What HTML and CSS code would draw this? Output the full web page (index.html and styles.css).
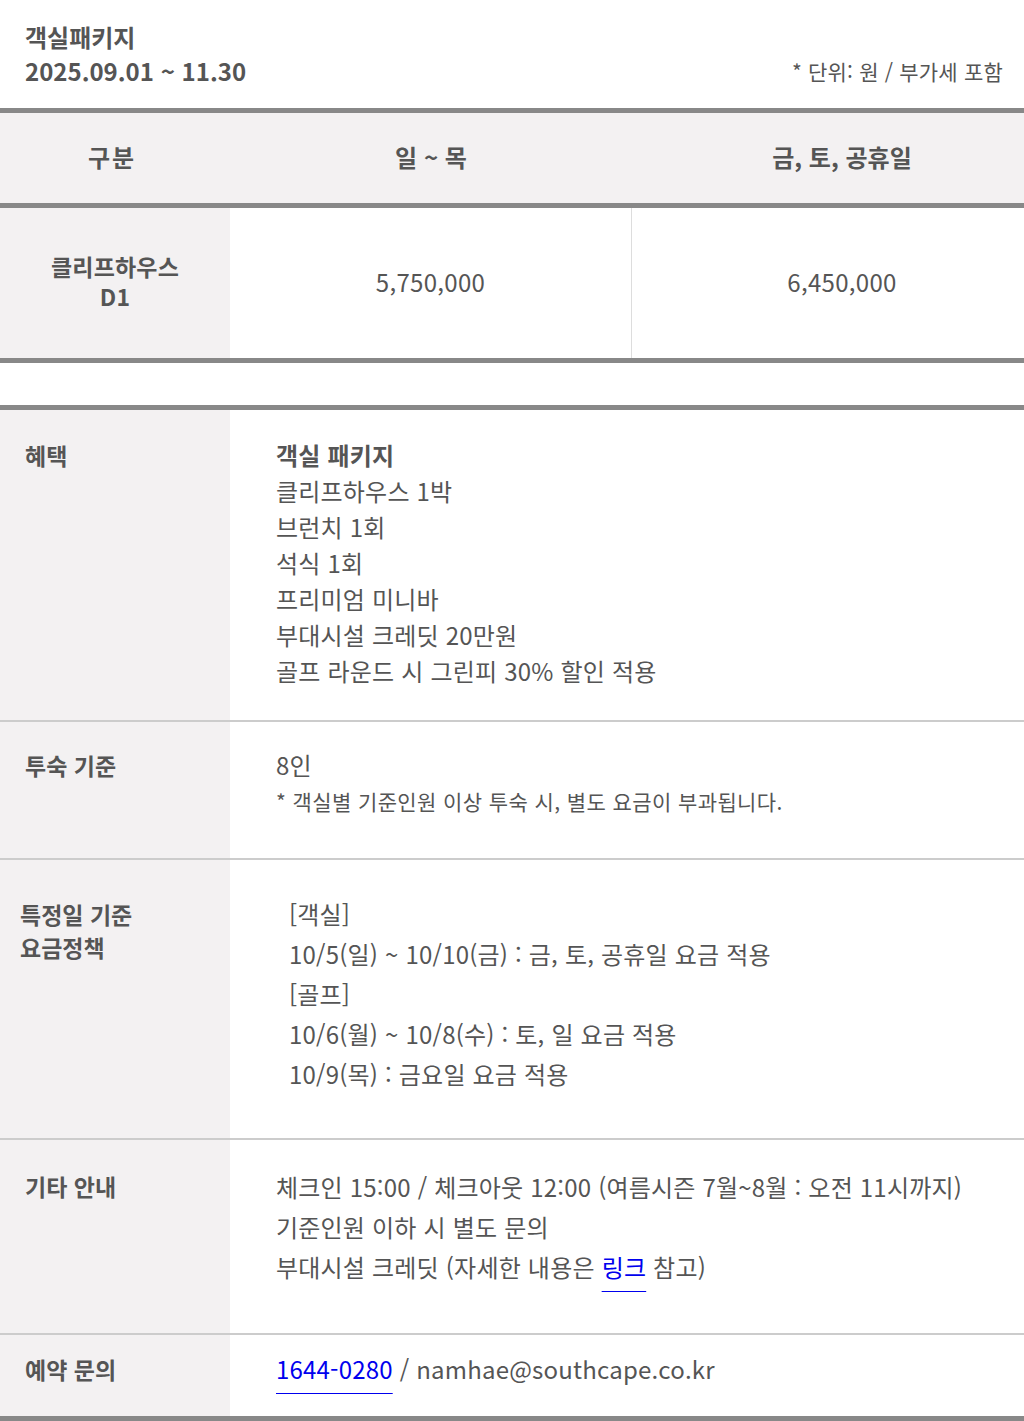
FILE: index.html
```html
<!DOCTYPE html>
<html lang="ko">
<head>
    <meta charset="UTF-8">
    <meta name="viewport" content="width=device-width, initial-scale=1.0">
    <title>객실패키지</title>
    <link rel="stylesheet" href="styles.css">
</head>
<body>
    <div class="package">
        <div class="package-top">
            <div class="package-name">
                <div>객실패키지</div>
                <div>2025.09.01 ~ 11.30</div>
            </div>
            <div class="unit-note">* 단위: 원 / 부가세 포함</div>
        </div>

        <!-- 요금표 -->
        <div class="price-table">
            <div class="price-head">
                <div class="col-type">구분</div>
                <div class="col-week">일 ~ 목</div>
                <div class="col-weekend">금, 토, 공휴일</div>
            </div>
            <div class="price-row">
                <div class="col-type room-name">
                    <span>클리프하우스</span>
                    <span>D1</span>
                </div>
                <div class="col-week">5,750,000</div>
                <div class="col-weekend">6,450,000</div>
            </div>
        </div>

        <!-- 상세 안내 -->
        <div class="info-table">
            <div class="info-row row-benefit">
                <div class="info-label">혜택</div>
                <div class="info-body">
                    <strong>객실 패키지</strong><br>
                    클리프하우스 1박<br>
                    브런치 1회<br>
                    석식 1회<br>
                    프리미엄 미니바<br>
                    부대시설 크레딧 20만원<br>
                    골프 라운드 시 그린피 30% 할인 적용
                </div>
            </div>
            <div class="info-row row-guest">
                <div class="info-label">투숙 기준</div>
                <div class="info-body">
                    8인
                    <div class="small-note">* 객실별 기준인원 이상 투숙 시, 별도 요금이 부과됩니다.</div>
                </div>
            </div>
            <div class="info-row row-special">
                <div class="info-label">특정일 기준<br>요금정책</div>
                <div class="info-body">
                    [객실]<br>
                    10/5(일) ~ 10/10(금) : 금, 토, 공휴일 요금 적용<br>
                    [골프]<br>
                    10/6(월) ~ 10/8(수) : 토, 일 요금 적용<br>
                    10/9(목) : 금요일 요금 적용
                </div>
            </div>
            <div class="info-row row-etc">
                <div class="info-label">기타 안내</div>
                <div class="info-body">
                    체크인 15:00 / 체크아웃 12:00 (여름시즌 7월~8월 : 오전 11시까지)<br>
                    기준인원 이하 시 별도 문의<br>
                    부대시설 크레딧 (자세한 내용은 <a href="#">링크</a> 참고)
                </div>
            </div>
            <div class="info-row row-contact">
                <div class="info-label">예약 문의</div>
                <div class="info-body">
                    <a href="#">1644-0280</a> / namhae@southcape.co.kr
                </div>
            </div>
        </div>
    </div>
</body>
</html>
```

FILE: styles.css
```css
body {
    margin: 0;
    padding: 0;
    background-color: #fff;
    font-family: "Noto Sans CJK KR", "Noto Sans", sans-serif;
    color: #555;
}

.package {
    width: 1024px;
    overflow: hidden;
}

.package-top {
    display: flex;
    justify-content: space-between;
    align-items: flex-end;
    padding: 20px 21px 20px 25px;
}

.package-name {
    font-size: 24px;
    font-weight: bold;
    line-height: 34px;
}

.unit-note {
    font-size: 21px;
    line-height: 34px;
    letter-spacing: 0.2px;
}

/* 요금표 */
.price-table {
    border-top: 5px solid #888;
    border-bottom: 5px solid #888;
}

.price-head,
.price-row {
    display: grid;
    grid-template-columns: 230px 402px 1fr;
}

.price-head {
    height: 90px;
    background-color: #f3f1f2;
    border-bottom: 5px solid #888;
    font-size: 24px;
    font-weight: bold;
}

.price-head > div,
.price-row > div {
    display: flex;
    align-items: center;
    justify-content: center;
    text-align: center;
    padding-bottom: 4px;
}

.price-head .col-type {
    padding-right: 6px;
    letter-spacing: 2px;
}

.price-head .col-weekend,
.price-row .col-weekend {
    padding-left: 28px;
}

.price-row {
    height: 150px;
    font-size: 24px;
    letter-spacing: 0.3px;
}

.price-row .col-type {
    background-color: #f3f1f2;
}

.price-row .room-name {
    flex-direction: column;
    font-size: 23px;
    font-weight: bold;
    line-height: 30px;
    letter-spacing: 0.2px;
}

.price-row .col-week {
    border-right: 1px solid #ddd;
}

/* 상세 안내 */
.info-table {
    margin-top: 42px;
    border-top: 5px solid #888;
    border-bottom: 5px solid #888;
}

.info-row {
    display: grid;
    grid-template-columns: 230px 1fr;
    border-bottom: 2px solid #ccc;
}

.info-row:last-child {
    border-bottom: none;
}

.info-label {
    background-color: #f3f1f2;
    padding-left: 25px;
    font-size: 23px;
    font-weight: bold;
    line-height: 36px;
}

.info-body {
    padding-left: 46px;
    font-size: 24px;
    line-height: 36px;
    letter-spacing: 0.2px;
}

.info-body strong {
    font-weight: bold;
}

.info-body a {
    color: #0000ee;
    text-decoration: underline;
    text-decoration-thickness: 1px;
    text-underline-offset: 14px;
}

.small-note {
    font-size: 21px;
    letter-spacing: 0.4px;
}

.row-benefit .info-label,
.row-benefit .info-body {
    padding-top: 27px;
    padding-bottom: 31px;
}

.row-guest .info-label,
.row-guest .info-body {
    padding-top: 25px;
}

.row-guest .info-body {
    padding-bottom: 39px;
}

.row-special .info-label {
    padding-left: 20px;
    padding-top: 38px;
    line-height: 33px;
}

.row-special .info-body {
    padding-left: 59px;
    padding-top: 34px;
    padding-bottom: 44px;
    line-height: 40px;
}

.row-etc .info-label {
    padding-top: 28px;
}

.row-etc .info-body {
    padding-top: 27px;
    padding-bottom: 46px;
    line-height: 40px;
}

.row-contact .info-label,
.row-contact .info-body {
    padding-top: 16px;
}

.row-contact .info-body {
    padding-bottom: 29px;
}
```
